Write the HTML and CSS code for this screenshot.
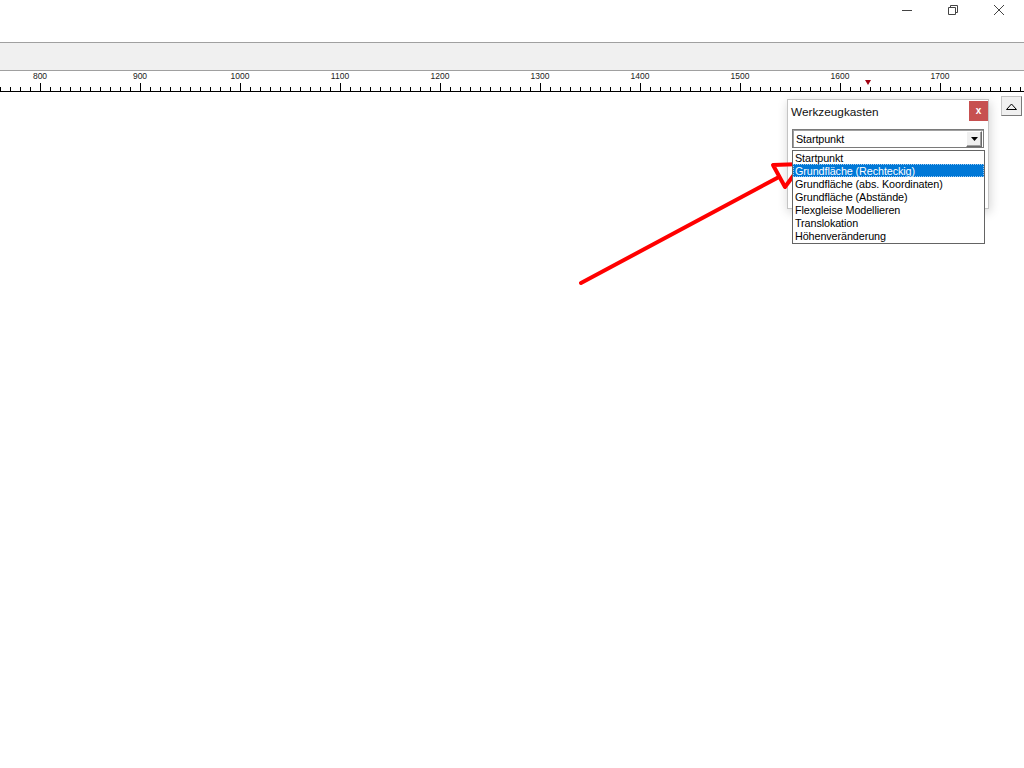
FILE: index.html
```html
<!DOCTYPE html>
<html lang="de">
<head>
<meta charset="utf-8">
<title>Werkzeugkasten</title>
<link rel="stylesheet" href="styles.css">
</head>
<body>
<div class="titlebar">
  <div class="winbtn"><svg width="10" height="10" viewBox="0 0 10 10"><path d="M0 5.5H10" stroke="#444" stroke-width="1"/></svg></div>
  <div class="winbtn"><svg width="10" height="10" viewBox="0 0 10 10"><path d="M0.5 2.5H7.5V9.5H0.5Z M2.5 2.5V0.5H9.5V7.5H7.5" stroke="#444" stroke-width="1" fill="none"/></svg></div>
  <div class="winbtn"><svg width="10" height="10" viewBox="0 0 10 10"><path d="M0 0L10 10M10 0L0 10" stroke="#444" stroke-width="1"/></svg></div>
</div>
<div class="toolbar"></div>
<div class="ruler">
  <div class="ruler-labels">
    <span>800</span><span>900</span><span>1000</span><span>1100</span><span>1200</span><span>1300</span><span>1400</span><span>1500</span><span>1600</span><span>1700</span>
  </div>
  <div class="marker"></div>
</div>
<div class="canvas"></div>

<div class="scroll-up"><svg width="11" height="7" viewBox="0 0 11 7"><path d="M0.5 6.5L5.5 1L10.5 6.5Z" stroke="#000" stroke-width="1" fill="none"/></svg></div>

<div class="panel">
  <div class="panel-head">
    <span class="panel-title">Werkzeugkasten</span>
    <span class="panel-close">x</span>
  </div>
  <div class="select">
    <span class="select-text">Startpunkt</span>
    <span class="select-btn"><svg width="7" height="4" viewBox="0 0 7 4"><path d="M0 0H7L3.5 4Z" fill="#000"/></svg></span>
  </div>
  <ul class="dropdown">
    <li>Startpunkt</li>
    <li class="selected">Grundfläche (Rechteckig)</li>
    <li>Grundfläche (abs. Koordinaten)</li>
    <li>Grundfläche (Abstände)</li>
    <li>Flexgleise Modellieren</li>
    <li>Translokation</li>
    <li>Höhenveränderung</li>
  </ul>
</div>

<svg class="arrow" width="1024" height="768" viewBox="0 0 1024 768">
  <path d="M581 283L779 177" stroke="#f00" stroke-width="4" stroke-linecap="round" fill="none"/>
  <path d="M773 165L802 164L785 187Z" stroke="#f00" stroke-width="4" stroke-linejoin="round" fill="none"/>
</svg>
</body>
</html>
```
FILE: styles.css
```css
html, body {
  margin: 0;
  padding: 0;
}
body {
  width: 1024px;
  height: 768px;
  overflow: hidden;
  position: relative;
  background: #fff;
  font-family: "Liberation Sans", Arial, sans-serif;
}
.titlebar {
  height: 42px;
  display: flex;
  justify-content: flex-end;
  align-items: flex-start;
  padding-right: 2px;
  box-sizing: border-box;
}
.winbtn {
  width: 46px;
  height: 20px;
  display: flex;
  align-items: center;
  justify-content: center;
}
.toolbar {
  height: 27px;
  background: #f0f0f0;
  border-top: 1px solid #a0a0a0;
  border-bottom: 1px solid #a0a0a0;
}
.ruler {
  position: relative;
  height: 20px;
  border-bottom: 1px solid #000;
  background-color: #fff;
  background-image:
    linear-gradient(to right, #000 1px, transparent 1px),
    linear-gradient(to right, #000 1px, transparent 1px);
  background-size: 100px 8px, 10px 4px;
  background-position: 40px 100%, 0 100%;
  background-repeat: repeat-x, repeat-x;
  overflow: hidden;
}
.ruler-labels {
  display: flex;
  margin-left: -10px;
  padding-top: 1px;
}
.ruler-labels span {
  flex: none;
  width: 100px;
  text-align: center;
  font-size: 8.5px;
  line-height: 9px;
  color: #222;
}
.marker {
  position: absolute;
  left: 865px;
  top: 9px;
  width: 0;
  height: 0;
  border-left: 3.5px solid transparent;
  border-right: 3.5px solid transparent;
  border-top: 5px solid #a00010;
}
.canvas {
  height: 676px;
  background: #fff;
}
.scroll-up {
  position: absolute;
  left: 1001px;
  top: 96px;
  width: 21px;
  height: 20px;
  box-sizing: border-box;
  background: #f0f0f0;
  border: 1px solid #c4c4c4;
  border-right-color: #7a7a7a;
  border-bottom-color: #7a7a7a;
  display: flex;
  align-items: center;
  justify-content: center;
}
.panel {
  position: absolute;
  left: 787px;
  top: 99px;
  width: 202px;
  height: 110px;
  box-sizing: border-box;
  background: #fff;
  border: 1px solid #c4c4c4;
  box-shadow: 1px 3px 10px rgba(0, 0, 0, 0.18);
}
.panel-head {
  display: flex;
  justify-content: space-between;
  align-items: flex-start;
  height: 29px;
  padding-top: 1px;
  box-sizing: border-box;
}
.panel-title {
  font-size: 11.8px;
  line-height: 22px;
  padding-left: 3px;
  color: #111;
}
.panel-close {
  width: 19px;
  height: 20px;
  background: #c75050;
  color: #fff;
  font-size: 10px;
  font-weight: bold;
  line-height: 19px;
  text-align: center;
}
.select {
  margin-left: 4px;
  width: 192px;
  height: 19px;
  box-sizing: border-box;
  border: 1px solid #7a7a7a;
  box-shadow: inset 1px 1px 0 #a0a0a0;
  display: flex;
  align-items: flex-start;
  justify-content: space-between;
}
.select-text {
  font-size: 10.8px;
  line-height: 19px;
  padding-left: 3px;
  color: #000;
  letter-spacing: -0.1px;
}
.select-btn {
  width: 16px;
  height: 16px;
  margin-top: 1px;
  margin-right: 1px;
  box-sizing: border-box;
  background: #f0f0f0;
  border: 1px solid #fff;
  border-right-color: #696969;
  border-bottom-color: #696969;
  box-shadow: inset -1px -1px 0 #a0a0a0;
  display: flex;
  align-items: center;
  justify-content: center;
}
.dropdown {
  position: absolute;
  left: 4px;
  top: 50px;
  z-index: 10;
  width: 193px;
  height: 94px;
  box-sizing: border-box;
  margin: 0;
  padding: 0;
  list-style: none;
  background: #fff;
  border: 1px solid #646464;
}
.dropdown li {
  height: 13px;
  line-height: 15px;
  font-size: 10.8px;
  padding-left: 2px;
  color: #000;
  white-space: nowrap;
  letter-spacing: -0.1px;
}
.dropdown li.selected {
  background: #0078d7;
  color: #fff;
  outline: 1px dotted #9cc9f0;
  outline-offset: -1px;
}
.arrow {
  position: absolute;
  left: 0;
  top: 0;
  z-index: 5;
  pointer-events: none;
}
```
